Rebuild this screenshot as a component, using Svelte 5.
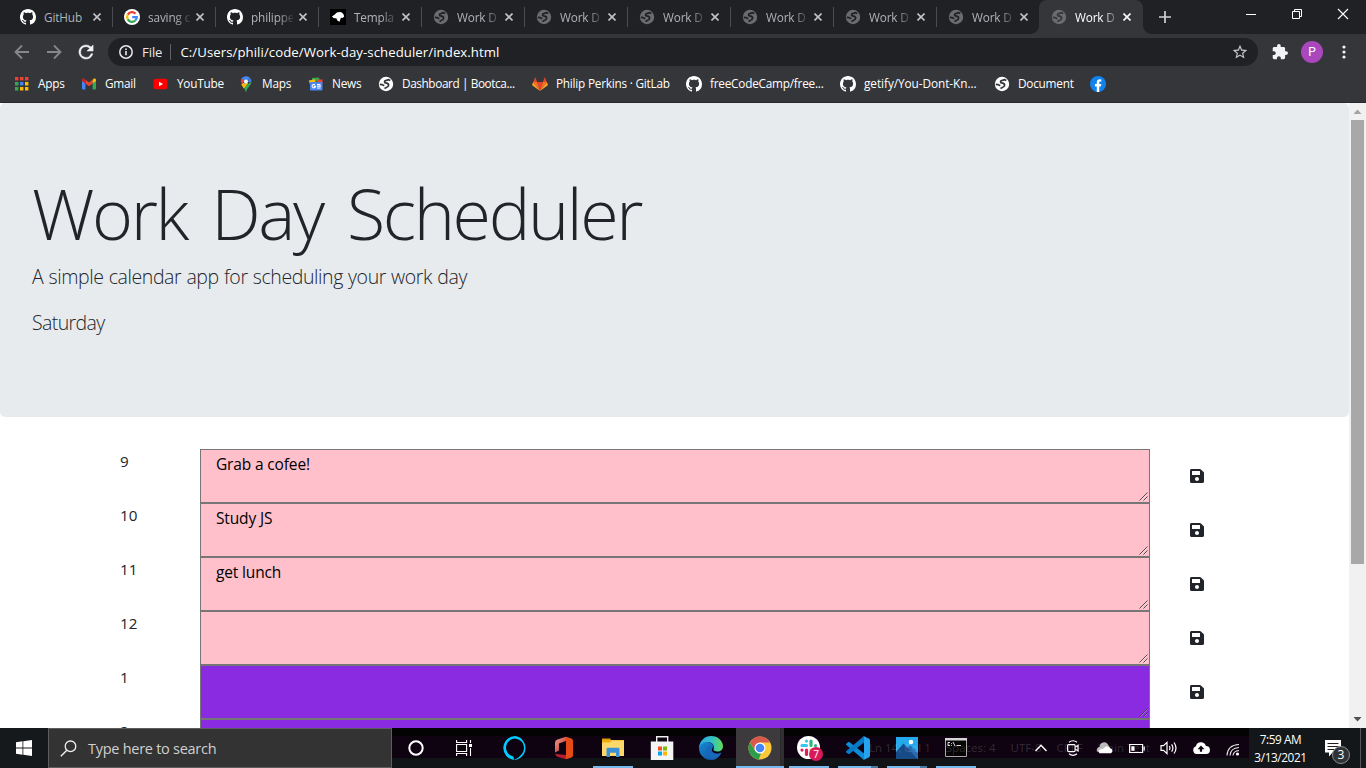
<script>
  const tabs = [
    { icon: 'github', text: 'GitHub' },
    { icon: 'google', text: 'saving c' },
    { icon: 'github', text: 'philippe' },
    { icon: 'dino', text: 'Templa' },
    { icon: 'globe', text: 'Work D' },
    { icon: 'globe', text: 'Work D' },
    { icon: 'globe', text: 'Work D' },
    { icon: 'globe', text: 'Work D' },
    { icon: 'globe', text: 'Work D' },
    { icon: 'globe', text: 'Work D' },
    { icon: 'globe', text: 'Work D', active: true }
  ];
  const bookmarks = [
    { icon: 'apps', text: 'Apps' },
    { icon: 'gmail', text: 'Gmail' },
    { icon: 'youtube', text: 'YouTube' },
    { icon: 'maps', text: 'Maps' },
    { icon: 'news', text: 'News' },
    { icon: 'globe', text: 'Dashboard | Bootca...', tight: true },
    { icon: 'gitlab', text: 'Philip Perkins · GitLab' },
    { icon: 'github', text: 'freeCodeCamp/free...' },
    { icon: 'github', text: 'getify/You-Dont-Kn...', loose: true },
    { icon: 'globe', text: 'Document' },
    { icon: 'facebook', text: '' }
  ];
  const rows = [
    { hour: '9', text: 'Grab a cofee!', kind: 'past' },
    { hour: '10', text: 'Study JS', kind: 'past' },
    { hour: '11', text: 'get lunch', kind: 'past' },
    { hour: '12', text: '', kind: 'past' },
    { hour: '1', text: '', kind: 'future' },
    { hour: '2', text: '', kind: 'future' }
  ];
  const apps = [
    { icon: 'alexa' },
    { icon: 'office' },
    { icon: 'folder', open: true },
    { icon: 'store' },
    { icon: 'edge' },
    { icon: 'chrome', open: true, stacked: true, active: true },
    { icon: 'slack', open: true },
    { icon: 'vscode', open: true, stacked: true },
    { icon: 'photos', open: true, stacked: true },
    { icon: 'cmd', open: true }
  ];
  const tray = ['chevron', 'meet', 'cloud', 'battery', 'sound', 'upload', 'wifi'];
</script>

{#snippet glyph(name)}
  {#if name === 'github'}
    <svg width="16" height="16" viewBox="0 0 16 16"><path fill="#fff" fill-rule="evenodd" d="M8 0C3.58 0 0 3.58 0 8c0 3.54 2.29 6.53 5.47 7.59.4.07.55-.17.55-.38 0-.19-.01-.82-.01-1.49-2.01.37-2.53-.49-2.69-.94-.09-.23-.48-.94-.82-1.13-.28-.15-.68-.52-.01-.53.63-.01 1.08.58 1.23.82.72 1.21 1.87.87 2.33.66.07-.52.28-.87.51-1.07-1.78-.2-3.64-.89-3.64-3.95 0-.87.31-1.59.82-2.15-.08-.2-.36-1.02.08-2.12 0 0 .67-.21 2.2.82.64-.18 1.32-.27 2-.27s1.36.09 2 .27c1.53-1.04 2.2-.82 2.2-.82.44 1.1.16 1.92.08 2.12.51.56.82 1.27.82 2.15 0 3.07-1.87 3.75-3.65 3.95.29.25.54.73.54 1.48 0 1.07-.01 1.93-.01 2.2 0 .21.15.46.55.38A8.01 8.01 0 0 0 16 8c0-4.42-3.58-8-8-8z" /></svg>
  {:else if name === 'google'}
    <svg width="16" height="16" viewBox="0 0 16 16"><circle cx="8" cy="8" r="8" fill="#fff" /><g fill="none" stroke-width="2.3"><path stroke="#ea4335" d="M3.8 5.6A4.8 4.8 0 0 1 11.5 4.7" /><path stroke="#fbbc05" d="M3.8 5.6A4.9 4.9 0 0 0 3.8 10.4" /><path stroke="#34a853" d="M3.8 10.4A4.8 4.8 0 0 0 11.3 11.5" /><path stroke="#4285f4" d="M11.3 11.5A4.8 4.8 0 0 0 12.8 8.1H8.2" /></g></svg>
  {:else if name === 'dino'}
    <svg width="16" height="16" viewBox="0 0 16 16"><path d="M0 0h16v16H0z" /><path fill="#fff" d="M2 7.500C2.500 6.500 4 6.400 4.800 5.500 6 3.800 7.500 3 9.500 3c2.500 0 4.500 2 4.700 4.500L12.600 9l-1.700-.3L10.300 10.500 9.500 12.800 7.300 11.500 6.500 9.500 3.500 9z" /></svg>
  {:else if name === 'globe'}
    <svg width="16" height="16" viewBox="0 0 16 16"><circle cx="8" cy="8" r="7.200" fill="currentColor" /><path class="sea" d="M12.300 4.600 10.500 3.600 8.300 4.300Q6.500 4.600 6.500 5.800 6.600 6.900 8.500 7.100 10.700 7.400 10.600 9.200 10.300 11.200 8.300 11.500L6.500 12.500M1.800 8.300 4 8.600 6.300 9.700" /></svg>
  {:else if name === 'apps'}
    <svg width="16" height="16" viewBox="0 0 16 16">{#each [0, 1, 2] as c}<rect x={c * 5} y="1" width="3.400" height="3.400" fill="#ea4335" />{/each}<path fill="#34a853" d="M0 6h3.400v3.400H0zM0 11h3.400v3.400H0z" /><path fill="#4285f4" d="M5 6h3.400v3.400H5z" /><path fill="#fbbc05" d="M10 6h3.400v3.400H10zM5 11h3.400v3.400H5zM10 11h3.400v3.400H10z" /></svg>
  {:else if name === 'gmail'}
    <svg width="16" height="16" viewBox="0 0 16 16"><path fill="#4285f4" d="M1 4v8.500q0 1 1 1h2.400V7.400z" /><path fill="#34a853" d="M15 4v8.500q0 1-1 1h-2.400V7.400z" /><path fill="#ea4335" d="M4.400 3.800 8 6.500l3.600-2.700v3.700L8 10.200 4.400 7.500z" /><path fill="#c5221f" d="M1 4c0-1.500 1.600-1.900 2.600-1l.8.8v3.700L1 5z" /><path fill="#fbbc04" d="M15 4c0-1.500-1.600-1.900-2.600-1l-.8.8v3.700L15 5z" /></svg>
  {:else if name === 'youtube'}
    <svg width="16" height="16" viewBox="0 0 16 16"><rect x=".5" y="2.700" width="14" height="10.600" rx="2.400" fill="#f00" /><path fill="#fff" d="m6 5.800 4 2.200-4 2.200z" /></svg>
  {:else if name === 'maps'}
    <svg width="16" height="16" viewBox="0 0 16 16"><path fill="#34a853" d="M13.400 5.500c0 4-4 5.500-5.200 10.200-.2.700-.5.700-.6 0-.4-1.700-1-3-1.800-4.200z" /><path fill="#fbbc04" d="M3.300 8 6.300 6.500l4 .7-4.500 5.300C4.900 11 3.800 9.700 3.300 8z" /><path fill="#ea4335" d="M3.500 2.300 6.500 5 4 8C2.500 5.800 2.500 4 3.500 2.300z" /><path fill="#4285f4" d="M3.500 2.300C5.800-.7 10.500-.4 12 2L6.600 8.300 5.500 4z" /><path fill="#4285f4" d="M12 2q1.500 1.500 1.400 3.800L9.500 6z" /><circle cx="8" cy="5.400" r="2" fill="#fff" /></svg>
  {:else if name === 'news'}
    <svg width="16" height="16" viewBox="0 0 16 16"><path fill="#34a853" d="m4 2 7-.5 1 4H4z" /><path fill="#ea4335" d="m10 3.500 4.500 0v4L9 8z" /><path fill="#fbbc04" d="m.8 4.500 6-1.200 1 4-5.500 2z" /><rect x="2" y="6" width="12.500" height="8.500" rx="1" fill="#4a86f0" /><path fill="none" stroke="#fff" stroke-width="1.100" d="M7 8.900a1.700 1.700 0 1 0 .5 1.500H5.800M9 8.600h3.500M9 10.300h4M9 12h3.500" /></svg>
  {:else if name === 'gitlab'}
    <svg width="16" height="16" viewBox="0 0 16 16"><path fill="#e24329" d="m8 15 3-9H5zM1.200 6 3.200 1l1.900 5zM14.800 6l-2-5-1.900 5z" /><path fill="#fc6d26" d="M8 15 5.100 6H1.200zM8 15l2.900-9h3.900z" /><path fill="#fca326" d="M8 15 1.200 6 .2 8.600q-.2.600.3 1zM8 15l6.800-9 1 2.600q.2.600-.3 1z" /></svg>
  {:else if name === 'facebook'}
    <svg width="16" height="16" viewBox="0 0 16 16"><circle cx="8" cy="8" r="8" fill="#1183ee" /><path fill="#fff" d="M6.800 16v-5.500H4.900V8h1.900V6.400c0-2 1.200-3.100 3-3.100l1.500.1v2h-1c-.9 0-1.100.5-1.100 1.100V8h2.100l-.4 2.500H9.200V16z" /></svg>
  {:else if name === 'alexa'}
    <svg width="24" height="24" viewBox="0 0 24 24"><path fill="#0cf" fill-rule="evenodd" d="M12 0a12 12 0 0 0-1.200 23.900v-2.500c0-.5-.3-.8-.7-1A9 9 0 1 1 21 12c0 5-4.700 10-10.200 11.900A12 12 0 0 0 12 0z" /></svg>
  {:else if name === 'office'}
    <svg width="24" height="24" viewBox="0 0 24 24"><defs><linearGradient id="of" y2="1"><stop stop-color="#ffa58a" /><stop offset="1" stop-color="#a91f2a" /></linearGradient></defs><path fill="url(#of)" d="M14 .7 5.500 3.500Q3 4.300 3 7v9.500l4-2V7.600L14 5z" /><path fill="#b71c30" d="M3 16.500q0 1.500 1.600 1.500L14 19v4.300L6 21q-3-1.500-3-4.500z" /><path fill="#e64a19" d="m14 .7 5.500 1.800Q21 3 21 5v14q0 2-1.500 2.500L14 23.300z" /></svg>
  {:else if name === 'folder'}
    <svg width="24" height="24" viewBox="0 0 24 24"><path fill="#d89e00" d="M1 2.500h8l1.500 2H1z" /><path fill="#eead0e" d="M1 4h22v16H1z" /><path fill="#ffd86b" d="M1 6.500h8l1.500-2H23V20H1z" /><path fill="#3c91d6" d="M5.500 13q0-1.200 1.200-1.200h10.600q1.200 0 1.200 1.200v8H15v-4.200H9V21H5.500z" /></svg>
  {:else if name === 'store'}
    <svg width="24" height="24" viewBox="0 0 24 24"><path fill="none" stroke="#eee" stroke-width="1.400" d="M6.700 6V.8h11V6" /><path fill="#f5f5f5" d="M.8 5.500h22.500V24H.8z" /><path fill="#f25022" d="M8 10.500h4v4H8z" /><path fill="#7fba00" d="M13 10.500h4v4h-4z" /><path fill="#00a4ef" d="M8 15.500h4v4H8z" /><path fill="#ffb900" d="M13 15.500h4v4h-4z" /></svg>
  {:else if name === 'edge'}
    <svg width="24" height="24" viewBox="0 0 24 24"><defs><linearGradient id="ea"><stop stop-color="#28a8e8" /><stop offset=".55" stop-color="#35c1c5" /><stop offset="1" stop-color="#62dc50" /></linearGradient><linearGradient id="eb" y2="1"><stop stop-color="#168bd4" /><stop offset="1" stop-color="#124a9c" /></linearGradient></defs><path fill="url(#eb)" d="M0 12C0 7 5 5.500 9.500 6.300 13.500 7 15 10 13.500 12c-2 2.800.5 5.500 4.500 5.500 2 0 3.500-1 4-.7.600.4-3.300 7.200-10 7.200A12 12 0 0 1 0 12z" /><path fill="#1768ba" d="M8.500 11C6 15 8 21 14 23.500 19 23 21.500 18.500 22 17c-4 2-8.500.5-9.500-2.500-.5-1.800 1-2 1-3.500 0-2-3-2-5 0z" /><path fill="url(#ea)" d="M0 12C.5 4.500 6 0 12 0c7 0 12 5 12 10.200 0 3.500-2.500 5.300-5.500 5.300-2.800 0-4.300-1-4-1.900C15.500 11.500 15 6 8.500 6 4.500 6 1 8.500 0 12z" /></svg>
  {:else if name === 'chrome'}
    <svg width="24" height="24" viewBox="0 0 24 24"><circle cx="12" cy="12" r="11.500" fill="#fbc93a" /><path fill="#2c9e4b" d="M2 6.300 7.200 14.900l4.800 2.600 1 0L10.700 23.400A11.500 11.500 0 0 1 2 6.300z" /><path fill="#d8584d" d="M2 6.300 7 14.500 6.500 12 12 6.500h10A11.500 11.500 0 0 0 2 6.300z" /><circle cx="12" cy="12" r="5.500" fill="#fff" /><circle cx="12" cy="12" r="4.300" fill="#4285f4" /></svg>
  {:else if name === 'slack'}
    <svg width="24" height="24" viewBox="0 0 24 24"><circle cx="11.500" cy="11.500" r="11.500" fill="#fff" /><g stroke-width="3.200" stroke-linecap="round"><path stroke="#36c5f0" d="M9.500 5v.1M5 9.500h4.500" /><path stroke="#2eb67d" d="M14 5v4.500M18.500 9.500v.1" /><path stroke="#e01e5a" d="M9.500 14v4.500M5 14v.1" /><path stroke="#ecb22e" d="M14 14h4.500" /></g></svg><span class="badge">7</span>
  {:else if name === 'vscode'}
    <svg width="24" height="24" viewBox="0 0 24 24"><path fill="#0d8bd6" d="m.3 7.800 1.900-1.700q.6-.4 1.200 0L18 17.500V24L.3 9q-.6-.6 0-1.200z" /><path fill="#0879c5" d="m.3 16.200 1.900 1.700q.6.400 1.200 0L18 6.500V0L.3 15q-.6.600 0 1.200z" /><path fill="#24a3ee" d="m17.500 0 5.200 2.500Q24 3.200 24 4.500v15q0 1.300-1.300 2L17.500 24q.5-.5.500-1.500v-21q0-1-.5-1.500z" /></svg>
  {:else if name === 'photos'}
    <svg width="24" height="24" viewBox="0 0 24 24"><path fill="#24a9ed" d="M1 1h22v22H1z" /><path fill="#174b88" d="m1 16 7.500-8.500L23 23H1z" /><path fill="#2a6ab0" d="m12.500 12 3-2.500L23 17v6z" /><circle cx="16" cy="6" r="2.300" fill="#fff" /></svg>
  {:else if name === 'cmd'}
    <svg width="24" height="24" viewBox="0 0 24 24"><path fill="#050505" stroke="#a8a8a8" d="M1.500 2.500h21v18h-21z" /><path fill="#d5d5d5" d="M1 2h22v2.500H1z" /><path stroke="#ddd" stroke-width="1" fill="none" d="M6 6.500H4v3h2M7.500 7v.8M7.500 9v.8M9 6l2 4M12.500 9.500H17" /></svg>
  {:else if name === 'chevron'}
    <svg width="16" height="16" viewBox="0 0 16 16"><path fill="none" stroke="#fff" stroke-width="1.400" d="M2.500 11 8 5.300l5.500 5.700" /></svg>
  {:else if name === 'meet'}
    <svg width="16" height="16" viewBox="0 0 16 16"><g fill="none" stroke="#fff" stroke-width="1.200"><rect x="2.600" y="4.600" width="7.500" height="7" rx="1" /><path d="m10.500 7 2.500-1.700v5.600L10.500 9.200M4 2.300Q8-.8 12 2.300M4 13.800q4 3 8 0" /></g></svg>
  {:else if name === 'cloud'}
    <svg width="18" height="16" viewBox="0 0 18 16"><path fill="#b9b9b9" d="M1 11.500a3.500 3.500 0 0 1 2.700-4.700A4.500 4.500 0 0 1 12 4.500L14 8 6 13z" /><path fill="#fff" d="M3.500 13.300a2.500 2.500 0 0 1 .8-4.100Q7 9.500 8 8a4 4 0 0 1 6.300.3 2.700 2.700 0 0 1 .7 5z" /></svg>
  {:else if name === 'battery'}
    <svg width="16" height="16" viewBox="0 0 16 16"><path fill="none" stroke="#fff" stroke-width="1.200" d="M.6 4.500h13v8H.6zM15.200 6.500v4" /><path fill="#fff" d="M2.300 6.200h3.200v4.600H2.300z" /></svg>
  {:else if name === 'sound'}
    <svg width="18" height="16" viewBox="0 0 18 16"><path fill="none" stroke="#fff" stroke-width="1.200" d="M1 5.700h2.500L7 2.300v11.400l-3.500-3.400H1zM9.300 6q1.300 2 0 4M11.600 4.300q2.600 3.700 0 7.400M14 2.500q4 5.500 0 11" /></svg>
  {:else if name === 'upload'}
    <svg width="18" height="16" viewBox="0 0 18 16"><path fill="#fff" d="M4.500 14a4 4 0 0 1-.6-7.700 5.200 5.200 0 0 1 10-.3A4 4 0 0 1 14 14z" /><path fill="#130414" d="m9 5.500 3.500 3.700h-2.400v2.500H7.900V9.200H5.500z" /></svg>
  {:else if name === 'wifi'}
    <svg width="16" height="16" viewBox="0 0 16 16"><g fill="none" stroke="#e8e8e8" stroke-width="1.100"><path d="M2 14.500Q2.500 4 14 3.500M5 14.500Q5.500 7 14 6.500M8 14.500Q8.500 10 14 9.500" /></g><circle cx="12.500" cy="13" r="1.600" fill="#fff" /></svg>
  {/if}
{/snippet}

<div class="screen">
  <header class="chrome">
    <div class="tabstrip">
      {#each tabs as tab, i}
        <div class="tab" class:active={tab.active} class:sep={i < 9}>
          <span class="favicon">{@render glyph(tab.icon)}</span>
          <span class="label">{tab.text}</span>
          <svg class="close" width="8" height="8" viewBox="0 0 8 8"><path d="m.5.5 7 7m0-7-7 7" stroke="currentColor" stroke-width="1.600" /></svg>
        </div>
      {/each}
      <svg class="plus" width="12" height="12" viewBox="0 0 12 12"><path d="M6 0v12M0 6h12" stroke="#cfd1d4" stroke-width="1.700" /></svg>
      <div class="controls">
        <svg width="46" height="28" viewBox="0 0 46 28"><path d="M18 14.500h10" stroke="#fff" /></svg>
        <svg width="46" height="28" viewBox="0 0 46 28"><path d="M18.500 11.500h7v7h-7zM20.500 11.500v-2h7v7h-2" stroke="#fff" fill="none" /></svg>
        <svg width="46" height="28" viewBox="0 0 46 28"><path d="m18 9 10 10m0-10L18 19" stroke="#fff" stroke-width="1.100" /></svg>
      </div>
    </div>

    <div class="toolbar">
      <div class="nav">
        <svg width="16" height="16" viewBox="0 0 16 16"><path d="M15 8H2M8 1.500 1.500 8 8 14.500" fill="none" stroke="#85878a" stroke-width="1.800" /></svg>
        <svg width="16" height="16" viewBox="0 0 16 16"><path d="M1 8h13M8 1.500 14.500 8 8 14.500" fill="none" stroke="#85878a" stroke-width="1.800" /></svg>
        <svg width="16" height="16" viewBox="3 3 18 18"><path fill="#f1f3f4" stroke="#f1f3f4" stroke-width=".5" d="M17.650 6.350A7.960 7.960 0 0 0 12 4a8 8 0 1 0 7.730 10h-2.080A6 6 0 1 1 12 6c1.660 0 3.140.69 4.220 1.780L13 11h7V4z" /></svg>
      </div>
      <div class="omnibox">
        <svg width="14" height="14" viewBox="0 0 14 14"><circle cx="7" cy="7" r="6.200" fill="none" stroke="#e8eaed" stroke-width="1.500" /><path d="M7 6v4.300M7 3.500v1.600" stroke="#e8eaed" stroke-width="1.600" /></svg>
        <span class="scheme">File</span>
        <i></i>
        <span class="url">C:/Users/phili/code/Work-day-scheduler/index.html</span>
        <svg class="star" width="16" height="16" viewBox="1 1 22 22"><path fill="#c6c8ca" d="m22 9.240-7.190-.62L12 2 9.190 8.630 2 9.240l5.460 4.730L5.820 21 12 17.270 18.180 21l-1.630-7.030zM12 15.400l-3.760 2.270 1-4.280-3.320-2.880 4.380-.38L12 6.100l1.710 4.040 4.380.38-3.320 2.880 1 4.280z" /></svg>
      </div>
      <svg class="puzzle" width="16" height="16" viewBox="1 1 22 22"><path fill="#f1f3f4" d="M20.500 11H19V7c0-1.100-.9-2-2-2h-4V3.500a2.500 2.500 0 0 0-5 0V5H4c-1.100 0-1.990.9-1.990 2v3.800H3.500c1.490 0 2.700 1.210 2.700 2.700s-1.210 2.700-2.700 2.700H2V20c0 1.100.9 2 2 2h3.800v-1.500c0-1.490 1.210-2.700 2.700-2.700s2.700 1.210 2.700 2.700V22H17c1.100 0 2-.9 2-2v-4h1.500a2.500 2.500 0 0 0 0-5z" /></svg>
      <span class="avatar">P</span>
      <svg class="kebab" width="4" height="14" viewBox="0 0 4 14"><g fill="#f1f3f4"><circle cx="2" cy="2" r="1.600" /><circle cx="2" cy="7" r="1.600" /><circle cx="2" cy="12" r="1.600" /></g></svg>
    </div>

    <nav class="bookmarks">
      {#each bookmarks as b}
        <div class="bookmark" class:tight={b.tight} class:loose={b.loose}>{@render glyph(b.icon)}<span>{b.text}</span></div>
      {/each}
    </nav>
  </header>

  <div class="viewport">
    <main>
      <section class="jumbotron">
        <h1>Work Day Scheduler</h1>
        <p class="lead">A simple calendar app for scheduling your work day</p>
        <p class="day">Saturday</p>
      </section>
      <section class="planner">
        {#each rows as row}
          <div class="row">
            <div class="hour">{row.hour}</div>
            <div class="entry {row.kind}">
              {row.text}
              <svg class="grip" width="9" height="9" viewBox="0 0 9 9"><path d="m.5 8.500 8-8M4.500 8.500l4-4" stroke="#3d3d3d" stroke-width=".9" /><path d="m1.500 8.500 7-7M5.500 8.500l3-3" stroke="#fff" stroke-opacity=".5" stroke-width=".6" /></svg>
            </div>
            <div class="save">
              <svg width="14" height="16" viewBox="0 0 448 512"><path fill="#212529" d="M433.941 129.941l-83.882-83.882A48 48 0 0 0 316.118 32H48C21.490 32 0 53.490 0 80v352c0 26.510 21.490 48 48 48h352c26.510 0 48-21.490 48-48V163.882a48 48 0 0 0-14.059-33.941zM224 416c-35.346 0-64-28.654-64-64 0-35.346 28.654-64 64-64s64 28.654 64 64c0 35.346-28.654 64-64 64zm96-304.520V212c0 6.627-5.373 12-12 12H76c-6.627 0-12-5.373-12-12V108c0-6.627 5.373-12 12-12h228.520c3.183 0 6.235 1.264 8.485 3.515l3.480 3.480A11.996 11.996 0 0 1 320 111.480z" /></svg>
            </div>
          </div>
        {/each}
      </section>
    </main>
    <aside class="scrollbar">
      <svg width="17" height="17" viewBox="0 0 17 17"><path fill="#a3a3a3" d="m4.500 11 4-4.500 4 4.500z" /></svg>
      <div class="thumb"></div>
      <svg class="down" width="17" height="17" viewBox="0 0 17 17"><path fill="#505050" d="m4.500 6 4 4.500 4-4.500z" /></svg>
    </aside>
  </div>

  <footer class="taskbar">
    <div class="start"><svg width="16" height="16" viewBox="0 0 16 16"><path fill="#fff" d="m0 2.200 6.500-.9v6.300H0zM7.300 1.200 16 0v7.600H7.300zM0 8.400h6.500v6.300L0 13.800zM7.300 8.400H16V16l-8.700-1.200z" /></svg></div>
    <div class="search">
      <svg width="17" height="17" viewBox="0 0 17 17"><circle cx="10.500" cy="6.300" r="5.300" fill="none" stroke="#eee" stroke-width="1.300" /><path d="M6.800 10.200.8 16.300" stroke="#eee" stroke-width="1.400" /></svg>
      <span>Type here to search</span>
    </div>
    <div class="slot"><svg width="16" height="16" viewBox="0 0 16 16"><circle cx="8" cy="8" r="6.700" fill="none" stroke="#fff" stroke-width="2" /></svg></div>
    <div class="slot"><svg width="17" height="16" viewBox="0 0 17 16"><path fill="none" stroke="#fff" stroke-width="1.100" d="M.6 0v2.500h10V0M.6 16v-2.500h10V16M.6 4.500h10v7H.6zM14.500 0v3M14.500 8v8" /><path fill="#fff" d="M13 4h3v3h-3z" /></svg></div>
    <div class="apps">
      {#each apps as app}
        <div class="app" class:active={app.active} class:open={app.open} class:stacked={app.stacked}>{@render glyph(app.icon)}</div>
      {/each}
    </div>
    <div class="status"><span>Ln 14, Col 1</span><span>Spaces: 4</span><span>UTF-8</span><span>CRLF</span><span>Plain Text</span></div>
    <div class="tray">
      {#each tray as t}<div>{@render glyph(t)}</div>{/each}
    </div>
    <div class="clock"><span>7:59 AM</span><span>3/13/2021</span></div>
    <div class="notices">
      <svg width="16" height="17" viewBox="0 0 16 17"><path fill="#fff" d="M0 0h16v12.500H7.500L4 16.500v-4H0z" /><path stroke="#222" d="M2.500 3.500h11M2.500 6.500h11M2.500 9.500h8" /></svg>
      <span>3</span>
    </div>
  </footer>
</div>

<style>
  :global(body) { margin: 0; overflow: hidden; }
  .screen { width: 1366px; height: 768px; display: flex; flex-direction: column; overflow: hidden; background: #fff; font-family: "Open Sans", "Noto Sans", sans-serif; color: #212529; }
  .screen * { box-sizing: border-box; }
  svg { display: block; flex: none; }
  .sea { fill: none; stroke: var(--bg); stroke-width: 1.7; }

  .chrome { height: 103px; flex: none; background: #35363a; border-bottom: 1px solid #28292b; }
  .tabstrip { display: flex; height: 34px; padding-left: 10px; background: #202124; position: relative; }
  .tab { --bg: #202124; position: relative; display: flex; align-items: center; width: 103px; padding: 0 10px 0 11px; color: #9aa0a6; }
  .tab:first-child { padding: 0 11px 0 10px; }
  .tab.sep::after { content: ""; position: absolute; right: 0; top: 7px; width: 1px; height: 20px; background: #4a4c50; }
  .favicon { color: #6a6c70; width: 16px; }
  .tab .label { width: 42px; margin-left: 8px; overflow: hidden; white-space: nowrap; font-size: 11.800px; letter-spacing: -.15px; line-height: 18px; color: #b0b3b8; -webkit-mask-image: linear-gradient(90deg, #000 65%, rgba(0, 0, 0, .15)); mask-image: linear-gradient(90deg, #000 65%, rgba(0, 0, 0, .15)); }
  .tab:first-child .label { -webkit-mask-image: none; mask-image: none; }
  .tab .close { margin-left: 6px; color: #c0c2c5; }
  .tab:first-child .close { margin-left: 7px; }
  .tab.active { --bg: #35363a; margin-left: -1px; width: 104px; padding-left: 12px; background: #35363a; border-radius: 8px 8px 0 0; }
  .tab.active .label { color: #fff; }
  .tab.active .close { color: #fff; }
  .tab.active::before, .tab.active::after { content: ""; position: absolute; bottom: 0; width: 8px; height: 8px; }
  .tab.active::before { left: -8px; background: radial-gradient(circle at 0 0, transparent 7.500px, #35363a 8px); }
  .tab.active::after { right: -8px; background: radial-gradient(circle at 100% 0, transparent 7.500px, #35363a 8px); }
  .plus { margin: 11px 0 0 16px; }
  .controls { display: flex; margin-left: auto; }

  .toolbar { display: flex; align-items: center; height: 36px; padding-right: 20px; }
  .nav { display: flex; gap: 16px; padding: 0 14px; }
  .omnibox { display: flex; align-items: center; width: 1150px; height: 28px; padding: 0 10px 0 11px; border-radius: 14px; background: #202124; color: #e8eaed; font-size: 13px; }
  .scheme { margin-left: 9px; letter-spacing: -.05px; }
  .omnibox i { width: 1px; height: 16px; margin: 0 9px 0 8px; background: #5f6368; }
  .url { color: #fff; font-size: 13.200px; letter-spacing: .07px; }
  .star { margin-left: auto; }
  .puzzle { margin-left: 14px; }
  .avatar { width: 22px; height: 22px; margin-left: 13px; border-radius: 50%; background: #ab47bc; color: #fff; font: 12px/22px Roboto, sans-serif; text-align: center; }
  .kebab { margin-left: 19px; }

  .bookmarks { --bg: #35363a; display: grid; grid-template-columns: 66px 72px 85px 70px 70px 154px 154px 154px 154px 96px 16px; height: 28px; padding-left: 15px; color: #fff; }
  .bookmark { display: flex; align-items: center; gap: 8px; white-space: nowrap; font-size: 11.800px; letter-spacing: -.23px; }
  .bookmark:first-child { gap: 7px; }
  .bookmark span { margin-top: -2px; }
  .bookmark.tight { letter-spacing: -.4px; }
  .bookmark.loose { letter-spacing: -.06px; }

  .viewport { display: flex; flex: 1; min-height: 0; overflow: hidden; }
  main { width: 1349px; overflow: hidden; }
  .jumbotron { height: 314px; padding: 64px 32px; border-radius: 5px; background: #e8ebee; }
  h1 { margin: 0; font-size: 70px; font-weight: 300; line-height: 92px; letter-spacing: -2.400px; word-spacing: 8.500px; white-space: nowrap; }
  .lead, .day { margin: 0; font-size: 19.500px; font-weight: 300; line-height: 30px; letter-spacing: -.4px; word-spacing: .5px; }
  .lead { margin-top: 3px; }
  .day { margin-top: 16px; letter-spacing: -.6px; }
  .planner { padding: 32px 105px 0; }
  .row { display: grid; grid-template-columns: 95px 950px 94px; height: 54px; }
  .hour { padding-left: 15px; font-size: 15.200px; line-height: 25px; }
  .entry { position: relative; padding: 1px 15px; border: 1px solid #767676; color: #000; font-size: 15.500px; letter-spacing: -.15px; line-height: 26px; }
  .past { background: #ffc0cb; }
  .future { background: #8a2be2; }
  .grip { position: absolute; right: 1px; bottom: 1px; }
  .save { display: flex; align-items: center; justify-content: center; }
  .scrollbar { display: flex; flex-direction: column; width: 17px; background: #f1f1f1; }
  .thumb { width: 13px; height: 444px; margin-left: 2px; background: #a8a8a8; }
  .down { margin-top: auto; }

  .taskbar { position: relative; display: flex; flex: none; height: 40px; background: linear-gradient(#030303 0 8px, #0f0312 8px 30px, #111416 30px); color: #fff; }
  .start { display: flex; align-items: center; justify-content: center; width: 48px; background: #15191c; }
  .search { display: flex; align-items: center; width: 344px; padding-left: 11px; border: 1px solid #5e5e5e; background: #333; color: #d0d0d0; font-size: 14.500px; letter-spacing: -.27px; }
  .search span { margin-left: 11px; }
  .slot { display: flex; align-items: center; justify-content: center; width: 48px; }
  .apps { display: flex; margin-left: 3px; }
  .app { position: relative; display: flex; align-items: center; justify-content: center; width: 49px; padding-right: 1px; }
  .app.active { background: linear-gradient(90deg, #3c3a3d 44px, #252426 44px, #302e31 45px 48px, transparent 48px); }
  .app.open::after { content: ""; position: absolute; bottom: 0; left: 4px; width: 40px; height: 2px; background: #76b9ed; }
  .app.stacked::after { background: linear-gradient(90deg, #76b9ed 33px, #4b7aa0 33px); }
  .app.active::after { left: 0; width: 48px; background: #76b9ed; }
  .badge { position: absolute; right: 11px; bottom: 7px; width: 14px; height: 14px; border-radius: 50%; background: #d8195a; font-size: 10px; line-height: 14px; text-align: center; }
  .status { position: absolute; left: 869px; top: 12px; display: flex; gap: 15px; color: rgba(255, 255, 255, .16); font-size: 11.500px; line-height: 16px; white-space: nowrap; pointer-events: none; }
  .tray { display: flex; margin-left: 44px; }
  .tray div { display: flex; align-items: center; justify-content: center; width: 32px; }
  .tray div:last-child { padding-top: 1px; }
  .clock { display: flex; flex-direction: column; align-items: center; justify-content: center; flex: 1; padding-left: 2px; background: #141719; font-size: 11.800px; line-height: 18px; }
  .clock span { letter-spacing: -.4px; }
  .notices { position: relative; width: 56px; padding: 12px 0 0 15px; background: #141719; border-right: 5px solid #17191b; box-shadow: inset -1px 0 #55585a; }
  .notices span { position: absolute; left: 22px; top: 18px; width: 18px; height: 18px; border: 1px solid #8a8c8e; border-radius: 50%; background: #303335; font-size: 12px; line-height: 16px; text-align: center; }
</style>
